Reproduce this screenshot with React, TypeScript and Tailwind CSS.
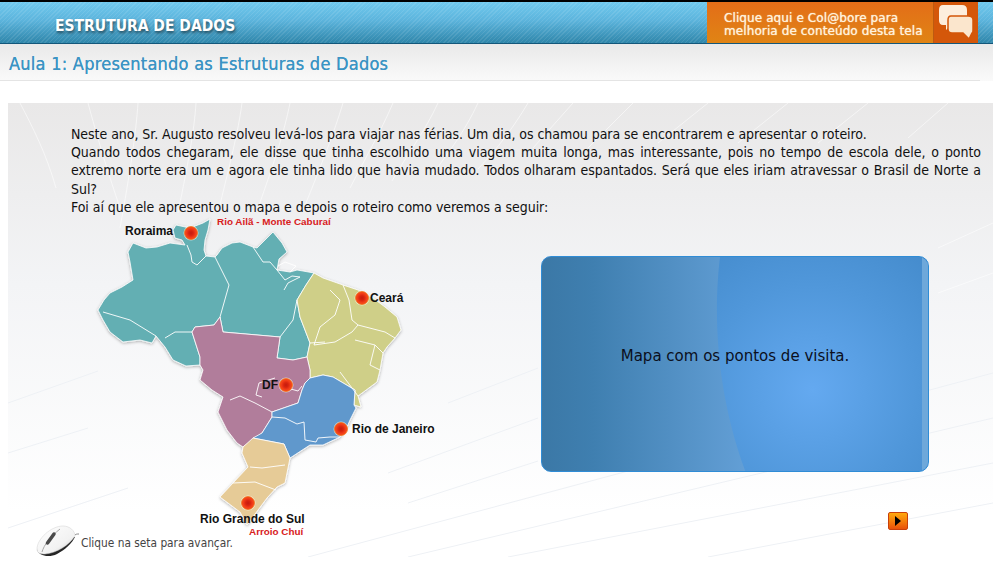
import React from 'react';

const bodyFont = '[font-family:"DejaVu_Sans_Condensed","DejaVu_Sans",sans-serif]';

function Markers() {
    const points = [
        [191, 233],
        [362, 298],
        [286, 385],
        [341, 429],
        [248, 503],
    ];
    return (
        <>
            {points.map(([x, y]) => (
                <g key={`${x}-${y}`}>
                    <circle cx={x} cy={y} r="7.5" fill="#fff" fillOpacity="0.55" />
                    <circle cx={x} cy={y} r="6.5" fill="url(#pin)" stroke="#f0761e" strokeWidth="0.8" />
                </g>
            ))}
        </>
    );
}

function BrazilMap() {
    return (
        <svg width="470" height="330" viewBox="71 216 470 330" className="shrink-0 block">
            <defs>
                <radialGradient id="pin">
                    <stop offset="0%" stopColor="#c41c10" />
                    <stop offset="35%" stopColor="#d8240f" />
                    <stop offset="75%" stopColor="#f5401a" />
                    <stop offset="100%" stopColor="#f24a14" />
                </radialGradient>
                <filter id="mapShadow" x="-5%" y="-5%" width="110%" height="110%">
                    <feDropShadow dx="0" dy="1" stdDeviation="1.5" floodColor="#000" floodOpacity="0.3" />
                </filter>
            </defs>
            <g filter="url(#mapShadow)" stroke="#fff" strokeWidth="0.8" strokeLinejoin="round">
                {/* Norte */}
                <path
                    fill="#64afb3"
                    d="M173 230 L176 225 L190 228 L203 223 L210 219 L208 230 L205 240 L204 250 L206 256 L215 257 L217 255 L222 248 L232 243 L240 242 L253 247 L257 248 L273 232 L282 243 L287 252 L279 259 L277 270 L290 272 L297 270 L303 271 L314 273 L306 285 L297 300 L300 317 L305 330 L310 343 L307 357 L293 360 L277 358 L280 337 L223 332 L220 317 L214 325 L195 327 L192 332 L200 357 L200 365 L186 366 L173 360 L165 347 L156 336 L152 343 L140 340 L123 342 L110 332 L103 320 L98 310 L104 300 L110 293 L122 287 L133 280 L130 262 L128 252 L133 243 L146 248 L157 247 L170 243 L185 245 L182 240 L175 238 Z"
                />
                {/* Nordeste */}
                <path
                    fill="#cfcf88"
                    d="M314 273 L323 278 L343 285 L358 290 L373 298 L385 307 L397 317 L401 330 L395 338 L387 347 L383 353 L380 370 L377 382 L358 396 L361 407 L354 405 L355 390 L333 377 L323 375 L310 378 L310 370 L307 357 L310 343 L305 330 L300 317 L297 300 L306 285 Z"
                />
                {/* Centro-Oeste */}
                <path
                    fill="#b17d9b"
                    d="M195 327 L214 325 L220 317 L223 332 L280 337 L277 358 L293 360 L307 357 L310 370 L310 378 L305 383 L302 390 L298 403 L272 412 L272 417 L262 433 L243 447 L237 443 L227 430 L218 412 L223 397 L212 390 L200 380 L203 370 L200 365 L200 357 L192 332 Z"
                />
                {/* Sudeste */}
                <path
                    fill="#6198cc"
                    d="M310 378 L323 375 L333 377 L355 390 L354 405 L356 408 L350 420 L347 427 L340 437 L323 445 L310 445 L290 458 L284 444 L253 438 L262 433 L272 417 L272 412 L298 403 L302 390 L305 383 Z"
                />
                {/* Sul */}
                <path
                    fill="#e6cb97"
                    d="M253 438 L284 444 L290 458 L285 483 L277 487 L267 498 L258 510 L247 525 L240 512 L220 497 L233 483 L248 467 L242 453 L243 447 Z"
                />
            </g>
            {/* divisas */}
            <g fill="none" stroke="#fff" strokeWidth="0.9" strokeLinejoin="round">
                <path d="M187 245 L191 255 L192 262 L197 265 L206 256" />
                <path d="M215 257 L229 285 L220 317" />
                <path d="M103 312 L130 320 L156 336" />
                <path d="M253 247 L263 262 L270 262 L277 270 L285 280" />
                <path d="M278 266 L285 262 L296 266 L290 272 M285 280 L292 276 L300 277 L288 283 L284 290" />
                <path d="M297 300 L293 320 L280 337" />
                <path d="M165 338 L175 332 L192 332" />
                <path d="M343 285 L349 300 L352 320 L358 325 L385 332 L395 338" />
                <path d="M330 290 L340 300 L335 315 L320 327 L314 345 L335 342 L352 332 L358 325" />
                <path d="M355 340 L375 345 L383 353 M375 345 L370 365 L380 370 M310 343 L325 342" />
                <path d="M358 396 L340 372" />
                <path d="M230 400 L240 396 L255 403 L272 412" />
                <path d="M262 397 L256 395 L259 383 L275 378 M280 386 L298 391 L302 386" />
                <path d="M272 417 L285 418 L297 424 L304 422 L305 440 L316 442 L318 438 L330 437 L340 437" />
                <path d="M250 467 L262 468 L285 465 M233 483 L255 482 L276 490" />
            </g>
            <Markers />
            <g fontFamily="'Liberation Sans', sans-serif" fontWeight="700" fontSize="12" fill="#111">
                <text x="125" y="235">Roraima</text>
                <text x="370" y="302">Ceará</text>
                <text x="262" y="389">DF</text>
                <text x="352" y="433">Rio de Janeiro</text>
                <text x="200" y="523">Rio Grande do Sul</text>
            </g>
            <g fontFamily="'Liberation Sans', sans-serif" fontWeight="700" fontSize="9.9" fill="#d8201c">
                <text x="217" y="225">Rio Ailã - Monte Caburaí</text>
                <text x="249" y="535">Arroio Chuí</text>
            </g>
        </svg>
    );
}

function BackgroundLines() {
    return (
        <svg className="absolute inset-0" width="985" height="454" viewBox="0 0 985 454" fill="none">
            <g stroke="#fff" strokeWidth="1" strokeOpacity="0.55">
                <path d="M12 0 C25 25 38 50 48 85" />
                <path d="M80 0 C88 30 100 70 112 105" />
                <path d="M130 0 C128 30 122 70 112 125" />
                <path d="M188 0 C186 30 180 60 170 110" />
                <path d="M234 0 C230 30 222 60 210 110" />
                <path d="M282 0 C276 30 266 60 250 105" />
                <path d="M335 0 C326 30 314 60 296 105" />
                <path d="M385 0 C372 30 360 50 342 85" />
                <path d="M430 0 C416 30 400 50 384 78" />
                <path d="M470 0 C456 30 440 50 424 72" />
                <path d="M520 0 C505 25 490 45 470 66" />
                <path d="M565 0 L525 45" />
                <path d="M625 0 L580 45" />
                <path d="M700 0 L650 40" />
                <path d="M780 0 L730 40" />
                <path d="M860 0 L810 40" />
                <path d="M940 0 L900 35" />
                <path d="M985 120 L930 145" />
                <path d="M985 170 L930 190" />
            </g>
            <g stroke="#eef1f5" strokeWidth="1">
                <path d="M0 300 L90 268" />
                <path d="M0 350 L80 325" />
                <path d="M0 425 L120 385" />
                <path d="M300 454 L985 270" />
                <path d="M400 454 L985 315" />
                <path d="M500 454 L985 360" />
                <path d="M380 370 L530 315" />
                <path d="M400 400 L530 358" />
                <path d="M700 454 L985 400" />
                <path d="M440 300 L530 265" />
            </g>
        </svg>
    );
}

function ChatIcon() {
    return (
        <svg width="36" height="35" viewBox="0 0 36 35">
            <path
                fill="#fdeedd"
                d="M5 0 H24 Q29 0 29 5 V15 Q29 20 24 20 H13 L8 25 L8 20 H5 Q1 20 1 15 V5 Q1 0 5 0 Z"
            />
            <path
                fill="#fbe6cd"
                stroke="#d4570a"
                strokeWidth="1.5"
                d="M13 11 H30 Q35 11 35 15 V24 Q35 28 34 28 L31 34 L25 28 H14 Q10 28 10 24 V15 Q10 11 13 11 Z"
            />
        </svg>
    );
}

function MouseIcon() {
    return (
        <svg width="44" height="36" viewBox="0 0 44 36" className="shrink-0">
            <defs>
                <linearGradient id="mouseBody" x1="0" y1="0" x2="1" y2="1">
                    <stop offset="0%" stopColor="#ffffff" />
                    <stop offset="65%" stopColor="#f2f2f2" />
                    <stop offset="100%" stopColor="#c4c4c4" />
                </linearGradient>
            </defs>
            <path d="M2 26 C3 33 14 35 22 31 C30 27 37 20 40 14 L20 14 Z" fill="#262626" />
            <path d="M2 26 C2 16 16 3 28 3 C35 3 40 8 40 13 C34 22 22 30 10 31 C5 31 2 30 2 26 Z" fill="url(#mouseBody)" stroke="#d0d0d0" strokeWidth="0.5" />
            <path d="M7 29 C9 22 15 14 25 6" stroke="#a8a8a8" strokeWidth="1" fill="none" />
            <path d="M12.5 20 L19 11" stroke="#4a4a4a" strokeWidth="3.5" strokeLinecap="round" />
            <path d="M40 12 C41 11 42 11 44 11" stroke="#888" strokeWidth="1" fill="none" />
        </svg>
    );
}

function BluePanel() {
    return (
        <div className="relative w-[388px] h-[216px] rounded-[10px] overflow-hidden border border-[#2f8cd6] flex items-center justify-center pb-[17px] bg-[radial-gradient(circle_at_70%_62%,#64a9f0_0%,#5097da_35%,#3f86c6_70%,#3a7fbd_100%)]">
            <svg className="absolute inset-0" width="388" height="216" viewBox="0 0 388 216">
                <defs>
                    <linearGradient id="lens" x1="0" y1="0" x2="1" y2="0">
                        <stop offset="0%" stopColor="#3b78a6" />
                        <stop offset="25%" stopColor="#3f7fb0" />
                        <stop offset="100%" stopColor="#639fd6" />
                    </linearGradient>
                </defs>
                <path d="M0 0 H178 C172 50 172 130 204 216 H0 Z" fill="url(#lens)" />
                <rect x="380" y="0" width="8" height="216" fill="#6ea8da" />
            </svg>
            <span className={`relative text-[16.7px] text-[#0b0f1c] ${bodyFont}`}>Mapa com os pontos de visita.</span>
        </div>
    );
}

export default function App() {
    return (
        <div className={`w-[993px] h-[572px] overflow-hidden bg-white ${bodyFont}`}>
            {/* Header */}
            <header className="h-[44px] flex justify-between border-t-2 border-t-black border-b border-b-[#13577a] bg-[repeating-linear-gradient(135deg,rgba(255,255,255,0.09)_0px,rgba(255,255,255,0.09)_1px,transparent_1px,transparent_3px),linear-gradient(to_bottom,#70c9ee,#5cb4dc_45%,#2f86aa)]">
                <div className="pl-[55px] pt-[14px] text-[15.5px] leading-[20px] font-bold text-white [text-shadow:1px_2px_3px_rgba(0,0,0,0.55)]">
                    ESTRUTURA DE DADOS
                </div>
                <div className="mr-[15px] w-[271px] flex bg-gradient-to-b from-[#e36d18] to-[#e08414]">
                    <div className="w-[226px] pl-[17px] pt-[10px] text-[12px] leading-[12.5px] tracking-[0.1px] text-[#fff2dc] [text-shadow:0_0_1px_#fff2dc] [font-family:'DejaVu_Sans',sans-serif]">
                        Clique aqui e Col@bore para<br />melhoria de conteúdo desta tela
                    </div>
                    <div className="flex-1 bg-[#d4570a] flex items-center justify-center border-l border-l-[#bd5a10]">
                        <ChatIcon />
                    </div>
                </div>
            </header>

            {/* Title */}
            <div className="h-[37px] bg-gradient-to-b from-[#e9e9e9] to-[#fafafa]">
                <div className="h-full mr-[13px] border-b border-b-[#e4e4e4] pl-[9px] pt-[8px]">
                    <h1 className="text-[18px] leading-[24px] tracking-[0.25px] text-[#3b94c4] [text-shadow:0_0_0.6px_#3b94c4]">Aula 1: Apresentando as Estruturas de Dados</h1>
                </div>
            </div>

            {/* Lesson panel */}
            <main className="relative ml-2 mt-[22px] h-[454px] overflow-hidden bg-gradient-to-b from-[#e9e8e8] via-[#f3f4f6] via-40% to-white to-90%">
                <BackgroundLines />
                <div className="relative flex flex-col">
                    <div className="pt-[22px] pl-[63px] pr-[12px] text-[14px] leading-[18.2px] tracking-[-0.045px] text-[#111] text-justify">
                        <p>Neste ano, Sr. Augusto resolveu levá-los para viajar nas férias. Um dia, os chamou para se encontrarem e apresentar o roteiro.</p>
                        <p>Quando todos chegaram, ele disse que tinha escolhido uma viagem muita longa, mas interessante, pois no tempo de escola dele, o ponto extremo norte era um e agora ele tinha lido que havia mudado. Todos olharam espantados. Será que eles iriam atravessar o Brasil de Norte a Sul?</p>
                        <p>Foi aí que ele apresentou o mapa e depois o roteiro como veremos a seguir:</p>
                    </div>
                    <div className="flex pl-[63px]">
                        <BrazilMap />
                        <div className="w-[388px] flex flex-col items-end pt-[40px]">
                            <BluePanel />
                            <button className="mt-[40px] mr-[21px] w-[20px] h-[18px] rounded-[2px] border border-[#c8400a] bg-gradient-to-b from-[#ffa80c] to-[#e8500a] flex items-center justify-center">
                                <span className="block w-0 h-0 border-y-[5px] border-y-transparent border-l-[6px] border-l-black" />
                            </button>
                        </div>
                    </div>
                    <div className="relative -mt-[23px] ml-[27px] flex items-center gap-[2px]">
                        <MouseIcon />
                        <span className="text-[11.8px] leading-[16px] mt-[3px] text-[#444]">Clique na seta para avançar.</span>
                    </div>
                </div>
            </main>
        </div>
    );
}
